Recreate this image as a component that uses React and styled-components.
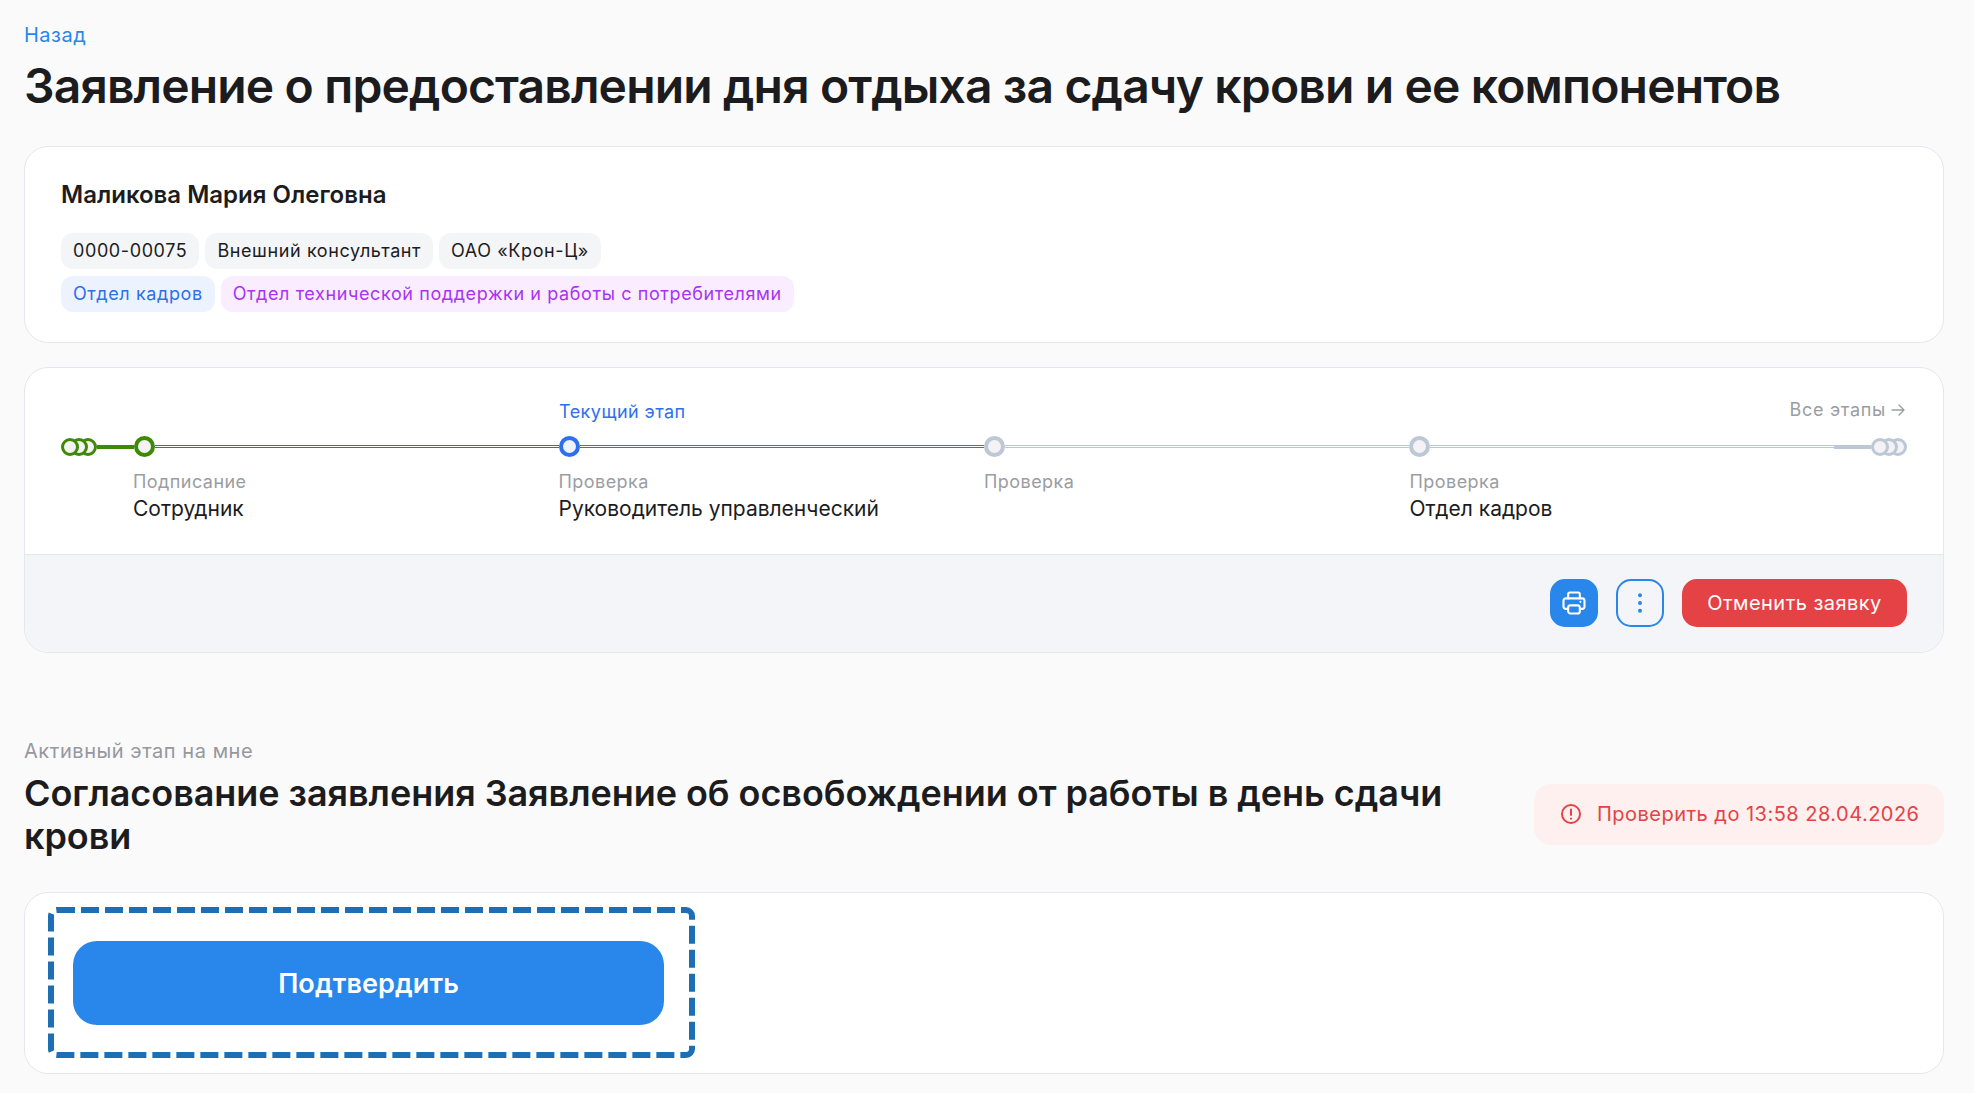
import React from 'react';
import styled, { createGlobalStyle } from 'styled-components';

const GlobalStyle = createGlobalStyle`
  html, body {
    margin: 0;
    background: #fafafb;
    font-family: Inter, "Noto Sans", sans-serif;
    color: #1c1c1e;
  }
  * { box-sizing: border-box; }
`

const Page = styled.div`
  padding: 23px 30px 20px 24px;
`
const BackLink = styled.a`
  display: block;
  font-size: 20px;
  line-height: 24px;
  letter-spacing: 0.5px;
  color: #2a86ea;
`
const Title = styled.h1`
  margin: 10px 0 31px;
  font-size: 48px;
  line-height: 58px;
  font-weight: 600;
  letter-spacing: -0.85px;
`
const Card = styled.div`
  background: #fff;
  border: 1px solid #e6e7ec;
  border-radius: 24px;
  overflow: hidden;
`
const ProfileCard = styled(Card)`
  padding: 33px 36px 30px;
  margin-bottom: 24px;
`
const Name = styled.div`
  font-size: 24px;
  line-height: 30px;
  font-weight: 600;
  margin-bottom: 23px;
`
const ChipRow = styled.div`
  display: flex;
  gap: 6px;
  margin-top: 7px;
`
const chipColors = {
  gray: ['#f4f5f7', '#1c1c1e'],
  blue: ['#ecf3ff', '#2f6fed'],
  purple: ['#f9edff', '#a933f5'],
}
const Chip = styled.span`
  height: 36px;
  padding: 0 12px 1px;
  display: flex;
  align-items: center;
  border-radius: 12px;
  font-size: 18px;
  letter-spacing: 0.6px;
  background: ${p => chipColors[p.$tone][0]};
  color: ${p => chipColors[p.$tone][1]};
`
const Stepper = styled.div`
  position: relative;
  height: 186px;
  padding: 68px 36px 0;
`
const Track = styled.div`
  display: flex;
  align-items: center;
  height: 21px;
`
const stageColors = {
  green: '#3f8a05',
  blue: '#2f6fed',
  gray: '#bcc8d6',
}
const Dot = styled.span`
  flex: none;
  width: 21px;
  height: 21px;
  border-radius: 50%;
  border: 4px solid ${p => stageColors[p.$tone]};
  background: ${p => (p.$tone === 'blue' ? '#ecf3ff' : '#f4f2f4')};
`
const StackDot = styled(Dot)`
  position: relative;
  z-index: ${p => p.$layer};
  width: 18px;
  height: 18px;
  border-width: 3px;
  & + & {
    margin-left: -9px;
  }
`
const DotStack = styled.div`
  display: flex;
  flex: none;
`
const ThickLine = styled.span`
  flex: none;
  width: 37px;
  height: 4px;
  background: ${p => stageColors[p.$tone]};
`
const ThinLine = styled.span`
  flex: 1;
  height: 3px;
  background: #fff;
  border-top: 1px solid ${p => stageColors[p.$tone]};
  border-bottom: 1px solid ${p => stageColors[p.$tone]};
`
const StageLabels = styled.div`
  display: grid;
  grid-template-columns: repeat(4, 425.5px);
  margin: 13px 0 0 72px;
`
const StageCaption = styled.div`
  font-size: 18px;
  line-height: 24px;
  color: #9a9da3;
  letter-spacing: 0.45px;
`
const StageName = styled.div`
  margin-top: 1px;
  font-size: 21px;
  line-height: 27px;
`
const CurrentTag = styled.div`
  position: absolute;
  left: 534px;
  top: 32px;
  font-size: 18px;
  line-height: 24px;
  letter-spacing: 0.45px;
  color: #2f6fed;
`
const AllStages = styled.a`
  position: absolute;
  right: 37px;
  top: 30px;
  display: flex;
  align-items: center;
  gap: 4px;
  font-size: 18px;
  line-height: 24px;
  letter-spacing: 0.7px;
  color: #9a9da3;
`
const ActionBar = styled.div`
  display: flex;
  justify-content: flex-end;
  align-items: center;
  gap: 18px;
  height: 98px;
  padding: 0 36px 2px;
  background: #f4f5f8;
  border-top: 1px solid #e6e7ec;
`
const IconButton = styled.button`
  width: 48px;
  height: 48px;
  padding: 0;
  display: flex;
  align-items: center;
  justify-content: center;
  border-radius: 15px;
  border: 2px solid #2986ea;
  color: ${p => (p.$filled ? '#fff' : '#2986ea')};
  background: ${p => (p.$filled ? '#2986ea' : 'transparent')};
`
const CancelButton = styled.button`
  width: 225px;
  height: 48px;
  border: none;
  border-radius: 15px;
  background: #e44244;
  color: #fff;
  font-family: inherit;
  font-size: 20px;
  letter-spacing: 0.45px;
`
const SectionLabel = styled.div`
  margin-top: 86px;
  font-size: 20px;
  line-height: 24px;
  letter-spacing: 0.55px;
  color: #96989e;
`
const SectionHead = styled.div`
  display: flex;
  align-items: center;
  justify-content: space-between;
  gap: 50px;
  margin: 9px 0 34px;
`
const SectionTitle = styled.h2`
  margin: 0;
  flex: 1;
  font-size: 36px;
  line-height: 43px;
  font-weight: 600;
  letter-spacing: -0.05px;
`
const Deadline = styled.div`
  flex: none;
  display: flex;
  align-items: center;
  gap: 15px;
  width: 410px;
  height: 61px;
  margin-bottom: 2px;
  padding-left: 26px;
  border-radius: 17px;
  background: #fff0f0;
  color: #e44244;
  font-size: 20px;
  letter-spacing: 0.48px;
`
const ConfirmCard = styled(Card)`
  padding: 14px 23px 15px;
`
const FocusFrame = styled.div`
  position: relative;
  width: 647px;
  height: 151px;
  padding-left: 25px;
  display: flex;
  align-items: center;
`
const FrameDraw = styled.svg`
  position: absolute;
  inset: 0;
`
const ConfirmButton = styled.button`
  width: 591px;
  height: 84px;
  padding: 2px 0 0;
  border: none;
  border-radius: 24px;
  background: #2986ea;
  color: #fff;
  font-family: inherit;
  font-size: 27px;
  font-weight: 600;
  letter-spacing: 0.1px;
`

const App = () => {
  return (
    <Page>
      <GlobalStyle />
      <BackLink>Назад</BackLink>
      <Title>Заявление о предоставлении дня отдыха за сдачу крови и ее компонентов</Title>

      <ProfileCard>
        <Name>Маликова Мария Олеговна</Name>
        <ChipRow>
          <Chip $tone="gray">0000-00075</Chip>
          <Chip $tone="gray">Внешний консультант</Chip>
          <Chip $tone="gray">ОАО «Крон-Ц»</Chip>
        </ChipRow>
        <ChipRow>
          <Chip $tone="blue">Отдел кадров</Chip>
          <Chip $tone="purple">Отдел технической поддержки и работы с потребителями</Chip>
        </ChipRow>
      </ProfileCard>

      <Card>
        <Stepper>
          <CurrentTag>Текущий этап</CurrentTag>
          <AllStages>
            Все этапы
            <svg width="16" height="16" viewBox="0 0 16 16" fill="none" stroke="currentColor" strokeWidth="1.4" strokeLinecap="round" strokeLinejoin="round">
              <path d="M2 8h12M9 3l5 5-5 5" />
            </svg>
          </AllStages>
          <Track>
            <DotStack>
              <StackDot $tone="green" $layer={3} />
              <StackDot $tone="green" $layer={2} />
              <StackDot $tone="green" $layer={1} />
            </DotStack>
            <ThickLine $tone="green" />
            <Dot $tone="green" />
            <ThinLine $tone="green" />
            <Dot $tone="blue" />
            <ThinLine $tone="blue" />
            <Dot $tone="gray" />
            <ThinLine $tone="gray" />
            <Dot $tone="gray" />
            <ThinLine $tone="gray" />
            <ThickLine $tone="gray" />
            <DotStack>
              <StackDot $tone="gray" $layer={3} />
              <StackDot $tone="gray" $layer={2} />
              <StackDot $tone="gray" $layer={1} />
            </DotStack>
          </Track>
          <StageLabels>
            <div>
              <StageCaption>Подписание</StageCaption>
              <StageName>Сотрудник</StageName>
            </div>
            <div>
              <StageCaption>Проверка</StageCaption>
              <StageName>Руководитель управленческий</StageName>
            </div>
            <div>
              <StageCaption>Проверка</StageCaption>
            </div>
            <div>
              <StageCaption>Проверка</StageCaption>
              <StageName>Отдел кадров</StageName>
            </div>
          </StageLabels>
        </Stepper>
        <ActionBar>
          <IconButton $filled>
            <svg width="28" height="28" viewBox="0 0 24 24" fill="none" stroke="currentColor" strokeWidth="1.8" strokeLinecap="round" strokeLinejoin="round">
              <path d="M7 8V4.5A1.5 1.5 0 0 1 8.5 3h7A1.5 1.5 0 0 1 17 4.5V8" />
              <path d="M7 17H5a2 2 0 0 1-2-2v-5a2 2 0 0 1 2-2h14a2 2 0 0 1 2 2v5a2 2 0 0 1-2 2h-2" />
              <rect x="7" y="14" width="10" height="7" rx="2" />
              <path d="M17.5 11h.01" />
            </svg>
          </IconButton>
          <IconButton>
            <svg width="24" height="24" viewBox="0 0 24 24" fill="currentColor">
              <circle cx="12" cy="4.3" r="2" />
              <circle cx="12" cy="12" r="2" />
              <circle cx="12" cy="19.7" r="2" />
            </svg>
          </IconButton>
          <CancelButton>Отменить заявку</CancelButton>
        </ActionBar>
      </Card>

      <SectionLabel>Активный этап на мне</SectionLabel>
      <SectionHead>
        <SectionTitle>Согласование заявления Заявление об освобождении от работы в день сдачи крови</SectionTitle>
        <Deadline>
          <svg width="22" height="22" viewBox="0 0 22 22" fill="none" stroke="currentColor" strokeWidth="2" strokeLinecap="round">
            <circle cx="11" cy="11" r="9" />
            <path d="M11 6.5v5.5M11 15.5v.2" />
          </svg>
          Проверить до 13:58 28.04.2026
        </Deadline>
      </SectionHead>

      <ConfirmCard>
        <FocusFrame>
          <FrameDraw width="647" height="151" fill="none">
            <rect x="3" y="3" width="641" height="145" rx="6" stroke="#1c6fb4" strokeWidth="6" strokeDasharray="18 6" />
          </FrameDraw>
          <ConfirmButton>Подтвердить</ConfirmButton>
        </FocusFrame>
      </ConfirmCard>
    </Page>
  )
}

export default App
